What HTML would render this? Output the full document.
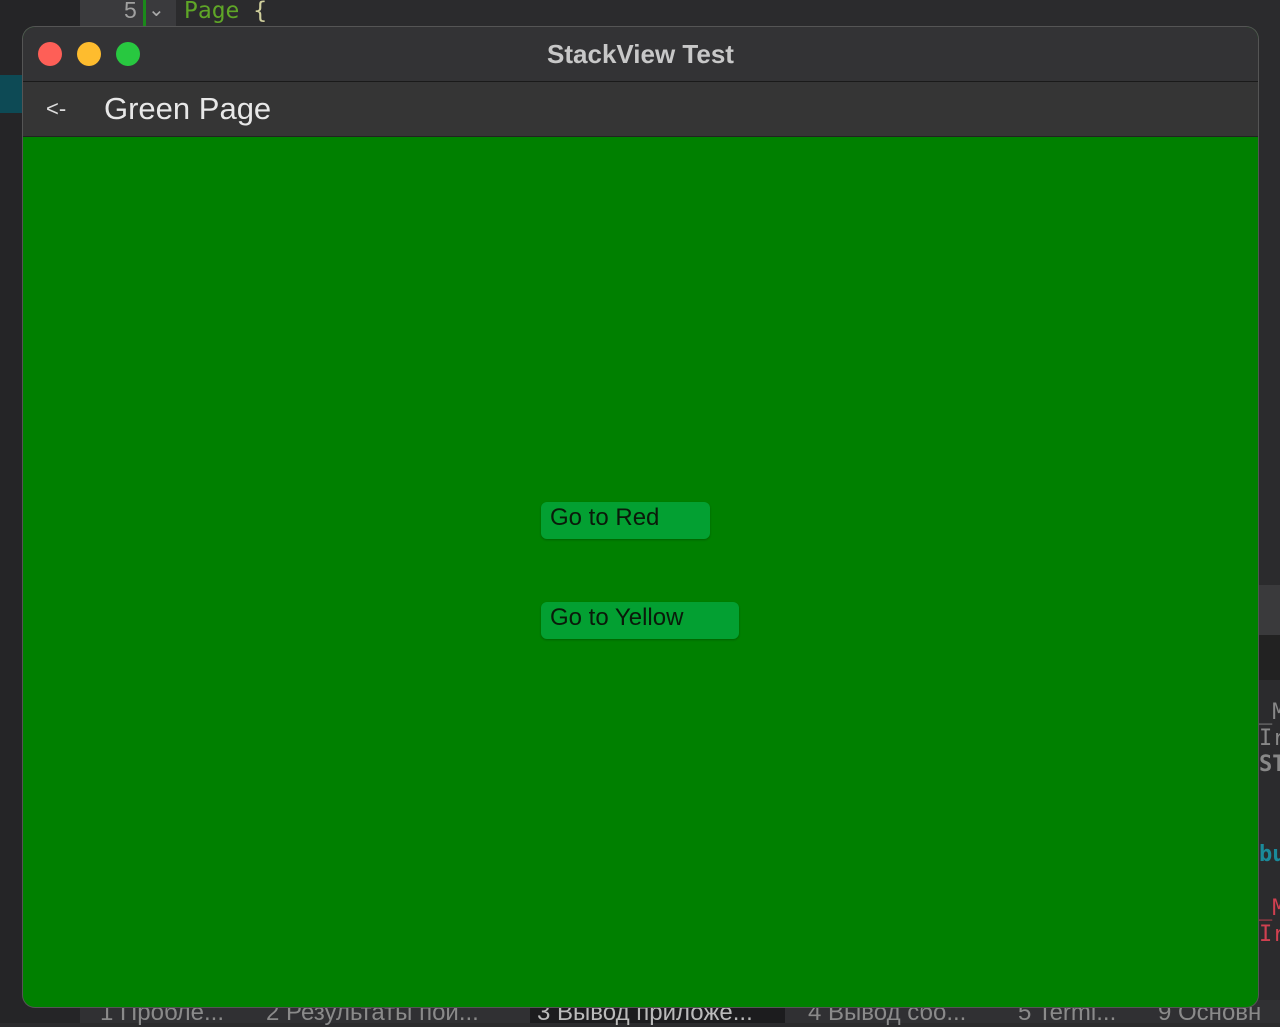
<!DOCTYPE html>
<html><head><meta charset="utf-8"><style>
body{margin:0;width:1280px;height:1023px;background:#2b2b2d;position:relative;overflow:hidden;font-family:"Liberation Sans","DejaVu Sans",sans-serif}
.abs{position:absolute}
.tab{position:absolute;top:999px;font-size:24px;color:#8a8a8a;white-space:nowrap}
</style></head><body>
<div class="abs" style="left:0;top:0;width:80px;height:1023px;background:#252527"></div>
<div class="abs" style="left:0;top:75px;width:24px;height:38px;background:#0d4a55"></div>
<div class="abs" style="left:80px;top:0;width:96px;height:28px;background:#3a3a3d"></div>
<div class="abs" style="left:143px;top:0;width:3px;height:28px;background:#1a8a1a"></div>
<div class="abs" style="left:124px;top:-3px;font-size:23px;color:#a0a0a0">5</div>
<div class="abs" style="left:148px;top:-3px;font-size:20px;color:#aaa">&#8964;</div>
<div class="abs" style="left:184px;top:-2px;font-size:23px;color:#5fa627;font-family:'DejaVu Sans Mono',monospace">Page <span style="color:#d0cf9c">{</span></div>
<div class="abs" style="left:1258px;top:585px;width:22px;height:50px;background:#3a3a3c"></div>
<div class="abs" style="left:1258px;top:635px;width:22px;height:45px;background:#222"></div>
<div class="abs" style="left:1259px;top:700px;font-size:22px;color:#888;font-family:'DejaVu Sans Mono',monospace;line-height:26px">_M<br>Ir<br><b>ST</b></div>
<div class="abs" style="left:1259px;top:842px;font-size:22px;color:#1a8a9a;font-family:'DejaVu Sans Mono',monospace"><b>bu</b></div>
<div class="abs" style="left:1259px;top:896px;font-size:22px;color:#d04050;font-family:'DejaVu Sans Mono',monospace;line-height:26px">_M<br>Ir</div>
<div class="abs" style="left:80px;top:1000px;width:1200px;height:23px;background:#303033"></div>
<div class="abs" style="left:530px;top:1000px;width:255px;height:23px;background:#1c1c1e"></div>
<div class="tab" style="left:100px">1 Пробле...</div>
<div class="tab" style="left:266px">2 Результаты пои...</div>
<div class="tab" style="left:537px;color:#bbb">3 Вывод приложе...</div>
<div class="tab" style="left:808px">4 Вывод сбо...</div>
<div class="tab" style="left:1018px">5 Termi...</div>
<div class="tab" style="left:1158px">9 Основн</div>

<div class="abs" style="left:23px;top:27px;width:1235px;height:980px;border-radius:12px;overflow:hidden;background:#008000;box-shadow:0 0 0 1px #555">
  <div style="height:54px;background:#333335;border-bottom:1px solid #1a1a1a;position:relative">
    <div class="abs" style="left:15px;top:15px;width:24px;height:24px;border-radius:50%;background:#fe5f57"></div>
    <div class="abs" style="left:54px;top:15px;width:24px;height:24px;border-radius:50%;background:#febc2e"></div>
    <div class="abs" style="left:93px;top:15px;width:24px;height:24px;border-radius:50%;background:#28c840"></div>
    <div style="text-align:center;line-height:54px;font-size:26px;font-weight:bold;color:#c8c8c8">StackView Test</div>
  </div>
  <div style="height:54px;background:#353535;position:relative;border-bottom:1px solid #222">
    <div class="abs" style="left:23px;top:14px;font-size:22px;color:#ddd">&lt;-</div>
    <div class="abs" style="left:81px;top:9px;font-size:31px;color:#e8e8e8">Green Page</div>
  </div>
  <div class="abs" style="left:518px;top:475px;width:169px;height:37px;border-radius:6px;background:#03a032;box-shadow:0 1px 2px rgba(0,0,0,.25)"><span style="position:absolute;left:9px;top:2px;font-size:24px;color:#0a1a0a">Go to Red</span></div>
  <div class="abs" style="left:518px;top:575px;width:198px;height:37px;border-radius:6px;background:#03a032;box-shadow:0 1px 2px rgba(0,0,0,.25)"><span style="position:absolute;left:9px;top:2px;font-size:24px;color:#0a1a0a">Go to Yellow</span></div>
</div>
</body></html>
